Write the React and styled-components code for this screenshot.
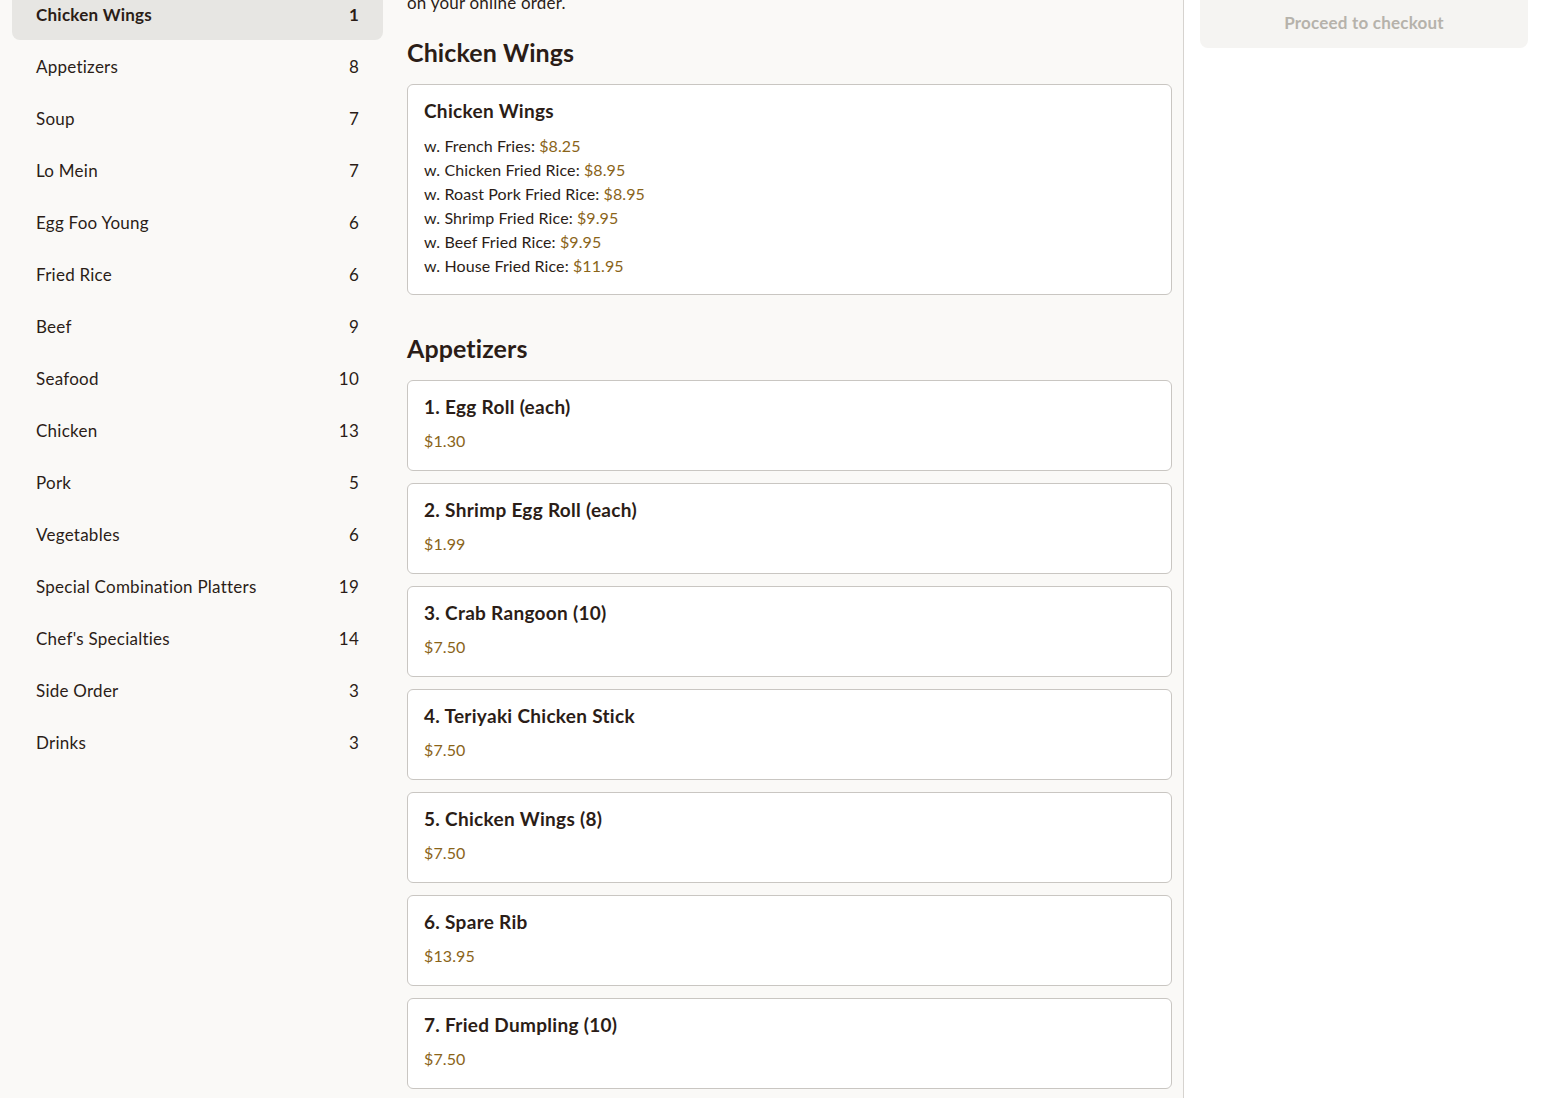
import React from "react";
import styled, { createGlobalStyle } from "styled-components";

// Menu page, scrolled a little down: sidebar of categories, menu cards, cart column.

const GlobalStyle = createGlobalStyle`
  html, body {
    margin: 0;
    padding: 0;
    background: #faf9f7;
    font-family: Lato, "Noto Sans", "Liberation Sans", sans-serif;
    color: #2b1d17;
    overflow: hidden;
  }
`;

const Page = styled.div`
  display: grid;
  grid-template-columns: 383px 801px 1fr;
  height: 1098px;
  overflow: hidden;
`;

const Sidebar = styled.nav`
  padding: 0 0 0 12px;
  margin-top: -12px;
  display: flex;
  flex-direction: column;
`;

const CategoryRow = styled.div`
  display: flex;
  justify-content: space-between;
  align-items: center;
  height: 52px;
  padding: 0 24px;
  border-radius: 8px;
  font-size: 17px;
  letter-spacing: 0.25px;
  color: #2b1d17;
  font-weight: ${(p) => (p.active ? 700 : 400)};
  background: ${(p) => (p.active ? "#e7e6e3" : "transparent")};
`;

const Main = styled.main`
  padding: 0 11px 0 24px;
  border-right: 1px solid #d6d3cf;
`;

const Intro = styled.p`
  margin: -9px 0 0;
  font-size: 17px;
  line-height: 24px;
  letter-spacing: 0.2px;
  color: #2b1d17;
`;

const SectionTitle = styled.h2`
  margin: 20px 0 0;
  font-size: 25px;
  line-height: 34px;
  font-weight: 700;
  letter-spacing: 0.1px;
  color: #2b1d17;
`;

const Section = styled.section`
  margin-bottom: 36px;
`;

const CardList = styled.div`
  display: flex;
  flex-direction: column;
  gap: 12px;
  margin-top: 15px;
`;

const Card = styled.div`
  background: #fff;
  border: 1px solid #c9c6c2;
  border-radius: 6px;
  padding: 15px 16px 16px;
  height: ${(p) => (p.fixed ? "91px" : "auto")};
  box-sizing: border-box;
`;

const CardTitle = styled.div`
  font-size: 19px;
  font-weight: 700;
  line-height: 22px;
  letter-spacing: 0.3px;
  color: #2b1d17;
  margin-bottom: ${(p) => (p.tight ? "11px" : "12px")};
`;

const Line = styled.div`
  font-size: 16px;
  line-height: 24px;
  letter-spacing: 0.1px;
  color: #2b1d17;
`;

const Price = styled.span`
  color: #8a6419;
`;

const CartPanel = styled.aside`
  background: #fff;
  padding: 0 16px;
`;

const CheckoutButton = styled.button`
  display: block;
  width: 100%;
  height: 60px;
  margin-top: -12px;
  padding-top: 10px;
  border: 0;
  border-radius: 8px;
  background: #f5f4f2;
  color: #b6b2ab;
  font-family: inherit;
  font-size: 17px;
  font-weight: 700;
  letter-spacing: 0.2px;
`;

const categories = [
  ["Chicken Wings", 1],
  ["Appetizers", 8],
  ["Soup", 7],
  ["Lo Mein", 7],
  ["Egg Foo Young", 6],
  ["Fried Rice", 6],
  ["Beef", 9],
  ["Seafood", 10],
  ["Chicken", 13],
  ["Pork", 5],
  ["Vegetables", 6],
  ["Special Combination Platters", 19],
  ["Chef's Specialties", 14],
  ["Side Order", 3],
  ["Drinks", 3],
];

const wingOptions = [
  ["w. French Fries", "$8.25"],
  ["w. Chicken Fried Rice", "$8.95"],
  ["w. Roast Pork Fried Rice", "$8.95"],
  ["w. Shrimp Fried Rice", "$9.95"],
  ["w. Beef Fried Rice", "$9.95"],
  ["w. House Fried Rice", "$11.95"],
];

const appetizers = [
  ["1. Egg Roll (each)", "$1.30"],
  ["2. Shrimp Egg Roll (each)", "$1.99"],
  ["3. Crab Rangoon (10)", "$7.50"],
  ["4. Teriyaki Chicken Stick", "$7.50"],
  ["5. Chicken Wings (8)", "$7.50"],
  ["6. Spare Rib", "$13.95"],
  ["7. Fried Dumpling (10)", "$7.50"],
  ["8. Steamed Dumpling (10)", "$7.50"],
];

export default function App() {
  return (
    <>
      <GlobalStyle />
      <Page>
        <Sidebar>
          {categories.map(([name, count], i) => (
            <CategoryRow key={name} active={i === 0}>
              <span>{name}</span>
              <span>{count}</span>
            </CategoryRow>
          ))}
        </Sidebar>

        <Main>
          <Intro>on your online order.</Intro>

          <Section>
            <SectionTitle>Chicken Wings</SectionTitle>
            <CardList>
              <Card>
                <CardTitle>Chicken Wings</CardTitle>
                {wingOptions.map(([label, price]) => (
                  <Line key={label}>
                    {label}: <Price>{price}</Price>
                  </Line>
                ))}
              </Card>
            </CardList>
          </Section>

          <Section>
            <SectionTitle>Appetizers</SectionTitle>
            <CardList>
              {appetizers.map(([name, price]) => (
                <Card key={name} fixed>
                  <CardTitle tight>{name}</CardTitle>
                  <Line>
                    <Price>{price}</Price>
                  </Line>
                </Card>
              ))}
            </CardList>
          </Section>
        </Main>

        <CartPanel>
          <CheckoutButton>Proceed to checkout</CheckoutButton>
        </CartPanel>
      </Page>
    </>
  );
}
